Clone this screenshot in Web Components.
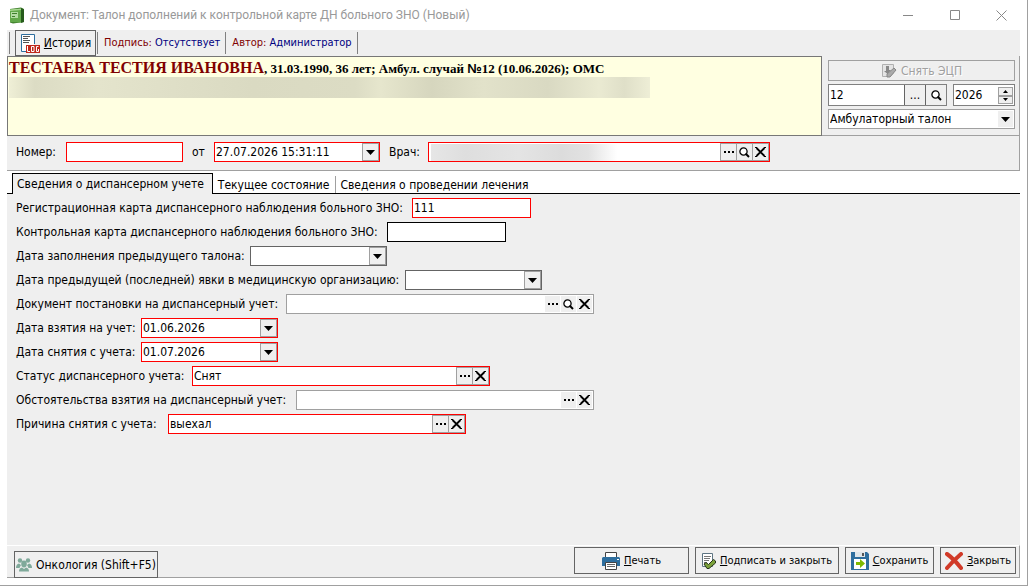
<!DOCTYPE html>
<html lang="ru">
<head>
<meta charset="utf-8">
<title>Талон дополнений</title>
<style>
    html, body {
        height: 100%;
        margin: 0;
    }
    body {
        font: 12px/16px "DejaVu Sans Condensed", "DejaVu Sans", sans-serif;
        color: #000;
        background: #fff;
    }
</style>
</head>
<body>
<talon-window></talon-window>

<script>
const BASE = `
    * { box-sizing: border-box; }
    button, input, select {
        font: inherit;
        color: inherit;
        margin: 0;
        padding: 0;
        border: 0;
        border-radius: 0;
        background: none;
        min-width: 0;
    }
    svg { display: block; flex: none; }
`;

const ICONS = {
    book: `<svg width="16" height="17" viewBox="0 0 16 17">
        <path d="M1 2 12 0.5 15 2V15L4 16.5 1 15.5Z" fill="#3f7f2c"/>
        <path d="M12 1 15 2.5V15L12 16Z" fill="#255a1b"/>
        <path d="M1 2.5 12 2V15.5L1 15Z" fill="#62a84a"/>
        <path d="M1 2.5 12 1.5V3L1 4Z" fill="#a8d890"/>
        <path d="M2 5H9V11H2Z" fill="#b4dca4"/>
        <path d="M3 6.500H8M3 9.500H6" stroke="#3f7f2c"/></svg>`,
    log: `<svg width="20" height="20" viewBox="0 0 20 20">
        <path d="M6 18.500H1.500V1.500H14.500V11" fill="#fff" stroke="#2e6e9e"/>
        <path d="M3 5.500H8M3 7.500H10M3 9.500H9M3 3.500H10" stroke="#555"/>
        <rect x="6" y="12" width="14" height="8" fill="#c0281c"/>
        <path d="M7.500 13V18.500H10M11.500 13.500V18.500H14V13.500ZM18.500 13.500H16.500V18.500H18.500V16" fill="none" stroke="#fff"/></svg>`,
    sign: `<svg width="16" height="16" viewBox="0 0 16 16">
        <path d="M1.500 1.500H12.500V10L9 13.500H1.500Z" fill="#e4e4e4" stroke="#b0b0b0"/>
        <path d="M5 3H8V7H10L6.500 11 3 8H5Z" fill="#888"/>
        <path d="M6 11 13 5 15 7 9 14 6 14Z" fill="#aaa" stroke="#888"/></svg>`,
    down: `<svg width="9" height="5" viewBox="0 0 9 5"><path d="M0 0H9L4.500 5Z"/></svg>`,
    dots: `<svg width="10" height="2" viewBox="0 0 10 2"><path d="M0 0H2V2H0ZM4 0H6V2H4ZM8 0H10V2H8Z"/></svg>`,
    find: `<svg width="11" height="11" viewBox="0 0 11 11">
        <circle cx="4.500" cy="4.500" r="3.600" fill="#fff" stroke="#000" stroke-width="1.300"/>
        <path d="M6.500 6.500 10 10" stroke="#000" stroke-width="2"/></svg>`,
    cross: `<svg width="11" height="10" viewBox="0 0 11 10">
        <path d="M1.500 1 9.500 9M9.500 1 1.500 9" stroke="#000" stroke-width="1.800"/>
        <path d="M0 .5H2M0 9.500H2M9 .5H11M9 9.500H11" stroke="#000"/></svg>`,
    people: `<svg width="16" height="14" viewBox="0 0 16 14" fill="#7fa99a">
        <circle cx="4" cy="2.500" r="2.200"/><circle cx="12" cy="2.500" r="2.200"/>
        <path d="M0 10Q0 6 3 5.500L5 7 3.500 10ZM16 10Q16 6 13 5.500L11 7 12.500 10Z"/>
        <ellipse cx="8" cy="6" rx="2.800" ry="3.400"/>
        <path d="M3 13.500Q3 10 6 9.500L8 11 10 9.500Q13 10 13 13.500Z"/></svg>`,
    print: `<svg width="18" height="18" viewBox="0 0 18 18">
        <path d="M3.500 6V.5H14.500V6" fill="#fff" stroke="#444"/>
        <path d="M1 5H17L18 6V14H0V6Z" fill="#2e6e9e"/>
        <path d="M15 7.500H17" stroke="#fff"/>
        <path d="M3.500 10.500H14.500V17.500H3.500Z" fill="#fff" stroke="#444"/>
        <path d="M5 12.500H13M5 14.500H13" stroke="#666"/></svg>`,
    check: `<svg width="14" height="16" viewBox="0 0 14 16">
        <path d="M.5.5H10.500V13.500H.5Z" fill="#fff" stroke="#5d7482"/>
        <path d="M2 3.500H9M2 5.500H8M2 7.500H7M2 9.500H5" stroke="#777"/>
        <path d="M2 11 4 9.500 6.500 11.500 11.500 6.500 13.500 8V10L7 15.500H5Z" fill="#7ba23a" stroke="#26331a"/></svg>`,
    save: `<svg width="18" height="18" viewBox="0 0 18 18">
        <path d="M0 0H16L18 2V18H0Z" fill="#2e6e9e"/>
        <path d="M4 0H14V5H4Z" fill="#dfe6ea"/><path d="M11 1H13V4H11Z" fill="#555"/>
        <path d="M3 7H15V17H3Z" fill="#fff"/>
        <path d="M5 10H9V7L14 11.500 9 16V13H5Z" fill="#7fba00"/></svg>`,
    close: `<svg width="18" height="18" viewBox="0 0 18 18">
        <path d="M2 2 Q9 7 16 16M16 2 Q9 8 2 16" fill="none" stroke="#d13a28" stroke-width="4" stroke-linecap="round"/></svg>`
};

class TitleBar extends HTMLElement {
    constructor() {
        super();
        this.attachShadow({mode: 'open'}).innerHTML = `
        <style>${BASE}
            :host {
                display: flex;
                align-items: center;
                height: 30px;
                padding: 0 2px 0 9px;
                gap: 5px;
                color: #999;
                font-family: Roboto, "Noto Sans", sans-serif;
            }
            .title { flex: 1; }
            .controls { display: flex; }
            button {
                display: grid;
                place-items: center;
                width: 47px;
                height: 30px;
            }
            .controls svg { fill: none; stroke: #888; }
        </style>
        ${ICONS.book}
        <div class="title"><slot></slot></div>
        <div class="controls">
            <button aria-label="Свернуть"><svg width="10" height="10"><path d="M0 5.500H10"/></svg></button>
            <button aria-label="Развернуть"><svg width="10" height="10"><path d="M.5.5H9.500V9.500H.5Z"/></svg></button>
            <button aria-label="Закрыть окно"><svg width="11" height="11"><path d="M.5.500 10.500 10.500M10.500.5.5 10.500"/></svg></button>
        </div>`;
    }
}
customElements.define('title-bar', TitleBar);

class IconButton extends HTMLElement {
    connectedCallback() {
        const icon = this.getAttribute('icon');
        const disabled = this.hasAttribute('disabled');
        this.attachShadow({mode: 'open'}).innerHTML = `
        <style>${BASE}
            :host { display: block; height: 27px; }
            button {
                display: flex;
                align-items: center;
                justify-content: center;
                gap: 4px;
                width: 100%;
                height: 100%;
                border: 1px solid #646464;
                white-space: nowrap;
            }
            button:disabled {
                color: #a0a0a0;
                border-color: #a0a0a0;
                text-shadow: 1px 1px #fff;
            }
        </style>
        <button ${disabled ? 'disabled' : ''}>${ICONS[icon]}<span><slot></slot></span></button>`;
    }
}
customElements.define('icon-button', IconButton);

// label + text box + small buttons at its right edge
class FormField extends HTMLElement {
    connectedCallback() {
        const label = this.getAttribute('label');
        const value = this.getAttribute('value') || '';
        const names = {down: 'Открыть список', dots: 'Выбрать', find: 'Найти', cross: 'Очистить'};
        const buttons = (this.getAttribute('buttons') || '').split(' ').filter(Boolean)
            .map(b => `<button class="${b}" aria-label="${names[b]}">${ICONS[b]}</button>`).join('');
        this.attachShadow({mode: 'open'}).innerHTML = `
        <style>${BASE}
            :host {
                display: flex;
                align-items: center;
                height: 20px;
                --line: #646464;
            }
            :host([kind="required"]) { --line: #f00; }
            :host([kind="plain"]) { --line: #000; }
            :host([kind="readonly"]) { --line: #a0a0a0; }
            label {
                flex: none;
                width: ${this.getAttribute('label-width')}px;
                white-space: nowrap;
            }
            .box {
                display: flex;
                width: ${this.getAttribute('box-width')}px;
                height: 20px;
                border: 1px solid var(--line);
                background: #fff;
            }
            input {
                flex: 1;
                width: 0;
                padding: 0 1px;
                outline: 0;
            }
            :host([masked]) input {
                background: linear-gradient(90deg, #e6e6e6, #dedede 12%, #e4e4e4 30%, #dcdcdc 45%, #e2e2e2 54%, #fff 64%) 2px 1px no-repeat;
            }
            button {
                display: grid;
                place-items: center;
                width: 17px;
                border: 1px solid #a0a0a0;
                background: #efefef;
            }
            button + button { margin-left: -1px; }
            :host([kind="readonly"]) button { border-color: #fff; }
        </style>
        <label for="f">${label}</label>
        <div class="box"><input id="f" type="text" value="${value}">${buttons}</div>`;
    }
}
customElements.define('form-field', FormField);

class ToolBar extends HTMLElement {
    constructor() {
        super();
        this.attachShadow({mode: 'open'}).innerHTML = `
        <style>${BASE}
            :host {
                display: flex;
                align-items: center;
                height: 26px;
                padding: 0 2px;
            }
            i { width: 1px; height: 22px; background: #808080; }
            icon-button { width: 81px; height: 26px; margin: 0 1px 0 5px; }
            span { padding: 0 5px 0 6px; color: #000080; font-size: 11px; }
            b { font-weight: normal; color: #800000; }
        </style>
        <i></i>
        <icon-button icon="log"><u>И</u>стория</icon-button>
        <i></i><span><b>Подпись:</b> Отсутствует</span>
        <i></i><span><b>Автор:</b> Администратор</span><i></i>`;
    }
}
customElements.define('tool-bar', ToolBar);

class PatientCard extends HTMLElement {
    constructor() {
        super();
        this.attachShadow({mode: 'open'}).innerHTML = `
        <style>${BASE}
            :host {
                display: block;
                height: 80px;
                padding: 3px 1px;
                border: 1px solid #777;
                background: #ffffe1;
                font: bold 13px/16px "Liberation Serif", serif;
            }
            .name { color: #800000; font-size: 16px; }
            .mask {
                width: 79%;
                height: 21px;
                background: linear-gradient(90deg, #efefd6, #dcdcc4 4%, #e4e4cc 14%, #dedec6 28%, #dadac2 38%, #dcdcc4 54%, #e6e6cd 58%, #d6d6be 66%, #e2e2ca 74%, #d9d9c2 84%, #eaead2 92%, #dfdfc8 96%, #eeeed6);
            }
        </style>
        <div><span class="name"><slot name="name"></slot></span><slot></slot></div>
        <div class="mask"></div>`;
    }
}
customElements.define('patient-card', PatientCard);

class CasePanel extends HTMLElement {
    constructor() {
        super();
        this.attachShadow({mode: 'open'}).innerHTML = `
        <style>${BASE}
            :host {
                display: flex;
                flex-direction: column;
                gap: 3px;
                height: 80px;
                padding: 4px 4px 0 6px;
                border: solid #a0a0a0;
                border-width: 0 1px 1px 0;
            }
            icon-button { height: 21px; }
            .row { display: flex; gap: 6px; height: 22px; }
            .box {
                display: flex;
                border: 1px solid #808080;
                background: #fff;
            }
            .case { flex: 1; }
            .year { width: 62px; }
            input { flex: 1; width: 0; padding: 0 1px; }
            .case button {
                display: grid;
                place-items: center;
                width: 21px;
                border-left: 1px solid #646464;
                background: #efefef;
            }
            .spin {
                display: grid;
                width: 17px;
                padding: 2px 1px 1px;
            }
            .spin button {
                display: grid;
                place-items: center;
                border: 1px solid #a0a0a0;
                background: #efefef;
            }
            .combo {
                display: grid;
                grid-template-columns: 1fr 17px;
                height: 20px;
                border: 1px solid #a0a0a0;
                background: #fff;
            }
            select {
                grid-area: 1 / 1 / 2 / 3;
                appearance: none;
                padding: 0 1px;
            }
            .arrow {
                grid-area: 1 / 2;
                display: grid;
                place-items: center;
                margin: 1px;
                background: #efefef;
                pointer-events: none;
            }
        </style>
        <icon-button icon="sign" disabled>Снять ЭЦП</icon-button>
        <div class="row">
            <div class="box case">
                <input type="text" value="12" aria-label="Номер случая">
                <button aria-label="Выбрать">...</button>
                <button aria-label="Найти">${ICONS.find}</button>
            </div>
            <div class="box year">
                <input type="text" value="2026" aria-label="Год">
                <div class="spin">
                    <button aria-label="Больше"><svg width="5" height="3"><path d="M0 3H5L2.500 0Z"/></svg></button>
                    <button aria-label="Меньше"><svg width="5" height="3"><path d="M0 0H5L2.500 3Z"/></svg></button>
                </div>
            </div>
        </div>
        <div class="combo">
            <select aria-label="Вид талона"><option>Амбулаторный талон</option></select>
            <span class="arrow">${ICONS.down}</span>
        </div>`;
    }
}
customElements.define('case-panel', CasePanel);

class TabStrip extends HTMLElement {
    connectedCallback() {
        const tabs = this.getAttribute('tabs').split('|');
        this.attachShadow({mode: 'open'}).innerHTML = `
        <style>${BASE}
            :host {
                display: flex;
                align-items: flex-end;
                height: 23px;
                padding-left: 5px;
                background: linear-gradient(#000, #000) bottom / 100% 1px no-repeat #fff;
            }
            button { height: 17px; margin-bottom: 1px; padding: 0 6px 0 5px; white-space: nowrap; }
            button + button + button { border-left: 1px solid #a0a0a0; padding: 0 4px; }
            .active {
                height: 21px;
                margin: 0;
                padding: 0 8px 0 4px;
                border: solid #000;
                border-width: 1px 1px 0;
                background: #efefef;
            }
        </style>
        ${tabs.map((t, i) => `<button role="tab" class="${i ? '' : 'active'}">${t}</button>`).join('')}`;
    }
}
customElements.define('tab-strip', TabStrip);

class TalonWindow extends HTMLElement {
    constructor() {
        super();
        this.attachShadow({mode: 'open'}).innerHTML = `
        <style>${BASE}
            :host {
                display: flex;
                flex-direction: column;
                height: calc(100% - 1px);
                border: solid #a0a0a0;
                border-width: 0 1px 1px 0;
                box-sizing: border-box;
            }
            .body {
                display: flex;
                flex-direction: column;
                flex: 1;
                margin: 0 7px 7px;
                background: #efefef;
            }
            .top { display: flex; }
            patient-card { flex: 1; }
            .num { font-family: "Liberation Sans", sans-serif; }
            case-panel { width: 198px; }
            .head {
                display: flex;
                gap: 9px;
                padding: 6px 9px 8px;
                border: solid #a0a0a0;
                border-width: 0 1px 1px 0;
            }
            .form {
                display: flex;
                flex: 1;
                flex-direction: column;
                gap: 4px;
                padding: 4px 9px;
            }
            footer {
                display: flex;
                gap: 6px;
                padding: 1px 3px 0 7px;
                height: 33px;
                border: solid #a0a0a0;
                border-width: 0 1px 1px 0;
                border-top: 1px solid #fff;
            }
            .onco { width: 144px; margin-top: 4px; }
            .gap { flex: 1; }
            .print { width: 115px; }
            .sign { width: 144px; }
            .save { width: 89px; }
            .close { width: 76px; }
            .print, .sign, .save, .close { font-size: 11px; }
        </style>
        <title-bar>Документ: Талон дополнений к контрольной карте ДН больного ЗНО (Новый)</title-bar>
        <div class="body">
            <tool-bar></tool-bar>
            <div class="top">
                <patient-card><span slot="name">ТЕСТАЕВА ТЕСТИЯ ИВАНОВНА</span>, 31.03.1990, 36 лет; Амбул. случай <span class="num">№</span>12 (10.06.2026); ОМС</patient-card>
                <case-panel></case-panel>
            </div>
            <div class="head">
                <form-field label="Номер:" label-width="50" box-width="117" kind="required"></form-field>
                <form-field label="от" label-width="22" box-width="166" kind="required" value="27.07.2026 15:31:11" buttons="down"></form-field>
                <form-field label="Врач:" label-width="39" box-width="342" kind="required" masked buttons="dots find cross"></form-field>
            </div>
            <tab-strip tabs="Сведения о диспансерном учете|Текущее состояние|Сведения о проведении лечения"></tab-strip>
            <div class="form">
                <form-field label="Регистрационная карта диспансерного наблюдения больного ЗНО:" label-width="396" box-width="119" kind="required" value="111"></form-field>
                <form-field label="Контрольная карта диспансерного наблюдения больного ЗНО:" label-width="371" box-width="119" kind="plain"></form-field>
                <form-field label="Дата заполнения предыдущего талона:" label-width="234" box-width="137" buttons="down"></form-field>
                <form-field label="Дата предыдущей (последней) явки в медицинскую организацию:" label-width="389" box-width="137" buttons="down"></form-field>
                <form-field label="Документ постановки на диспансерный учет:" label-width="270" box-width="308" kind="readonly" buttons="dots find cross"></form-field>
                <form-field label="Дата взятия на учет:" label-width="125" box-width="137" kind="required" value="01.06.2026" buttons="down"></form-field>
                <form-field label="Дата снятия с учета:" label-width="125" box-width="137" kind="required" value="01.07.2026" buttons="down"></form-field>
                <form-field label="Статус диспансерного учета:" label-width="176" box-width="298" kind="required" value="Снят" buttons="dots cross"></form-field>
                <form-field label="Обстоятельства взятия на диспансерный учет:" label-width="280" box-width="298" kind="readonly" buttons="dots cross"></form-field>
                <form-field label="Причина снятия с учета:" label-width="152" box-width="298" kind="required" value="выехал" buttons="dots cross"></form-field>
            </div>
            <footer>
                <icon-button class="onco" icon="people">Онкология (Shift+F5)</icon-button>
                <div class="gap"></div>
                <icon-button class="print" icon="print"><u>П</u>ечать</icon-button>
                <icon-button class="sign" icon="check"><u>П</u>одписать и закрыть</icon-button>
                <icon-button class="save" icon="save"><u>С</u>охранить</icon-button>
                <icon-button class="close" icon="close"><u>З</u>акрыть</icon-button>
            </footer>
        </div>`;
    }
}
customElements.define('talon-window', TalonWindow);
</script>
</body>
</html>
